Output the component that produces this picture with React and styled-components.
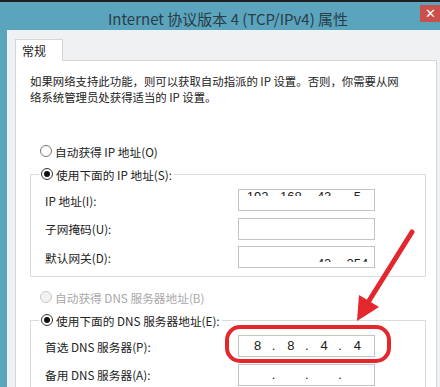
import React from 'react'
import styled, { createGlobalStyle } from 'styled-components'

const GlobalStyle = createGlobalStyle`
  body {
    margin: 0;
    background: #fff;
    font-family: "Noto Sans CJK SC", "Liberation Sans", sans-serif;
  }
`

const Window = styled.div`
  position: relative;
  width: 440px;
  height: 387px;
  overflow: hidden;
  display: flex;
  flex-direction: column;
  background: #5ba4be;
`

const TopEdge = styled.div`
  height: 5px;
  box-sizing: border-box;
  background: #fff;
  border-top: 2px solid #1e1e1e;
`

const TitleBar = styled.div`
  height: 28px;
  display: flex;
  align-items: flex-start;
`

const Title = styled.div`
  flex: 1;
  padding: 3px 0 0 36px;
  text-align: center;
  font-size: 15px;
  line-height: 28px;
  color: #2a3d47;
`

const CloseButton = styled.div`
  width: 20px;
  height: 17px;
  margin-top: 3px;
  background: #c9504b;
  color: #fff;
  font-size: 13px;
  line-height: 17px;
  text-align: center;
  font-family: "Liberation Sans", sans-serif;
`

const Body = styled.div`
  flex: 1;
  margin-left: 7px;
  display: flex;
  flex-direction: column;
  padding: 9px 3px 0 8px;
  background: #eff1f3;
`

const TabStrip = styled.div`
  display: flex;
  margin-bottom: -1px;
`

const Tab = styled.div`
  width: 48px;
  height: 22px;
  box-sizing: border-box;
  padding: 1px 0 0 6px;
  background: #fff;
  border: 1px solid #d6d6d6;
  border-bottom: none;
  font-size: 12px;
  line-height: 20px;
  color: #222;
  position: relative;
  z-index: 1;
`

const Panel = styled.div`
  flex: 1;
  background: #fff;
  border: 1px solid #d6d6d6;
  border-bottom: none;
  padding: 12px 10px 0 14px;
`

const Description = styled.p`
  margin: 0;
  font-size: 11.4px;
  line-height: 16px;
  color: #222;
  white-space: nowrap;
`

const RadioRow = styled.label`
  display: flex;
  align-items: center;
  gap: 3px;
  height: 16px;
  margin-top: ${p => p.$top || 0}px;
  padding-left: ${p => p.$indent ?? 10}px;
  font-size: 11.7px;
  color: ${p => (p.$disabled ? '#a8a8a8' : '#222')};
  white-space: nowrap;
`

const RadioDot = styled.span`
  width: 12px;
  height: 12px;
  box-sizing: border-box;
  border-radius: 50%;
  border: 1px solid ${p => (p.$disabled ? '#c8c8c8' : p.$checked ? '#333' : '#777')};
  background: ${p => (p.$disabled ? '#f2f2f2' : '#fff')};
  display: flex;
  align-items: center;
  justify-content: center;
  &::after {
    content: '';
    width: 6px;
    height: 6px;
    border-radius: 50%;
    background: #111;
    display: ${p => (p.$checked ? 'block' : 'none')};
  }
`

const GroupBox = styled.fieldset`
  margin: ${p => p.$top}px 0 0 0;
  padding: ${p => p.$inner}px 0 8px 14px;
  border: 1px solid #dcdcdc;
  min-width: 0;
`

const Legend = styled.legend`
  padding: 0 2px;
  margin-left: -6px;
`

const Rows = styled.div`
  display: grid;
  grid-template-columns: 193px 137px;
  row-gap: 6.5px;
  align-items: center;
`

const FieldLabel = styled.span`
  font-size: 11.7px;
  color: #222;
  white-space: nowrap;
`

const IpBox = styled.div`
  height: 22px;
  box-sizing: border-box;
  border: 1px solid #c4c4c4;
  background: #fff;
  overflow: hidden;
  padding-left: 2px;
`

/* part of the value is hidden in the screenshot: clip keeps only a strip of it */
const Clip = styled.div`
  height: ${p => p.$clip ?? 20}px;
  overflow: hidden;
`

const Segments = styled.div`
  display: flex;
  transform: translateY(${p => p.$shift || 0}px);
`

const Segment = styled.span`
  position: relative;
  width: 33.6px;
  text-align: center;
  font-family: "Liberation Sans", sans-serif;
  font-size: 13px;
  line-height: 20px;
  color: #1a1a1a;
  &:not(:last-child)::after {
    content: ${p => (p.$noDots ? "''" : "'.'")};
    position: absolute;
    right: -1px;
    top: 0;
  }
`

const Annotation = styled.svg`
  position: absolute;
  left: 0;
  top: 0;
  pointer-events: none;
`

const IpField = ({ values = ['', '', '', ''], shift, clip, noDots }) => (
  <IpBox>
    <Clip $clip={clip}>
      <Segments $shift={shift}>
        {values.map((v, i) => (
          <Segment key={i} $noDots={noDots}>{v}</Segment>
        ))}
      </Segments>
    </Clip>
  </IpBox>
)

const Radio = ({ checked, disabled, children, ...rest }) => (
  <RadioRow $disabled={disabled} {...rest}>
    <RadioDot $checked={checked} $disabled={disabled} />
    {children}
  </RadioRow>
)

export default function App() {
  return (
    <>
      <GlobalStyle />
      <Window>
        <TopEdge />
        <TitleBar>
          <Title>Internet 协议版本 4 (TCP/IPv4) 属性</Title>
          <CloseButton>✕</CloseButton>
        </TitleBar>
        <Body>
          <TabStrip>
            <Tab>常规</Tab>
          </TabStrip>
          <Panel>
            <Description>
              如果网络支持此功能，则可以获取自动指派的 IP 设置。否则，你需要从网
              <br />
              络系统管理员处获得适当的 IP 设置。
            </Description>

            <Radio $top={38}>自动获得 IP 地址(O)</Radio>

            <GroupBox $top={7} $inner={7}>
              <Legend>
                <Radio checked $indent={0}>使用下面的 IP 地址(S):</Radio>
              </Legend>
              <Rows>
                <FieldLabel>IP 地址(I):</FieldLabel>
                <IpField values={['192', '168', '43', '5']} shift={-3} clip={6} noDots />
                <FieldLabel>子网掩码(U):</FieldLabel>
                <IpField noDots />
                <FieldLabel>默认网关(D):</FieldLabel>
                <IpField values={['', '', '43', '254']} shift={7} clip={15} />
              </Rows>
            </GroupBox>

            <Radio disabled $top={12}>自动获得 DNS 服务器地址(B)</Radio>

            <GroupBox $top={7} $inner={7}>
              <Legend>
                <Radio checked $indent={0}>使用下面的 DNS 服务器地址(E):</Radio>
              </Legend>
              <Rows>
                <FieldLabel>首选 DNS 服务器(P):</FieldLabel>
                <IpField values={['8', '8', '4', '4']} />
                <FieldLabel>备用 DNS 服务器(A):</FieldLabel>
                <IpField />
              </Rows>
            </GroupBox>
          </Panel>
        </Body>

        <Annotation width="440" height="387" viewBox="0 0 440 387">
          <rect x="227" y="327" width="162" height="34" rx="13" fill="none" stroke="#e4262d" strokeWidth="4" />
          <line x1="412" y1="232" x2="367" y2="304" stroke="#e4262d" strokeWidth="5" strokeLinecap="round" />
          <polygon points="357,321 359,295 379,307" fill="#e4262d" />
        </Annotation>
      </Window>
    </>
  )
}
